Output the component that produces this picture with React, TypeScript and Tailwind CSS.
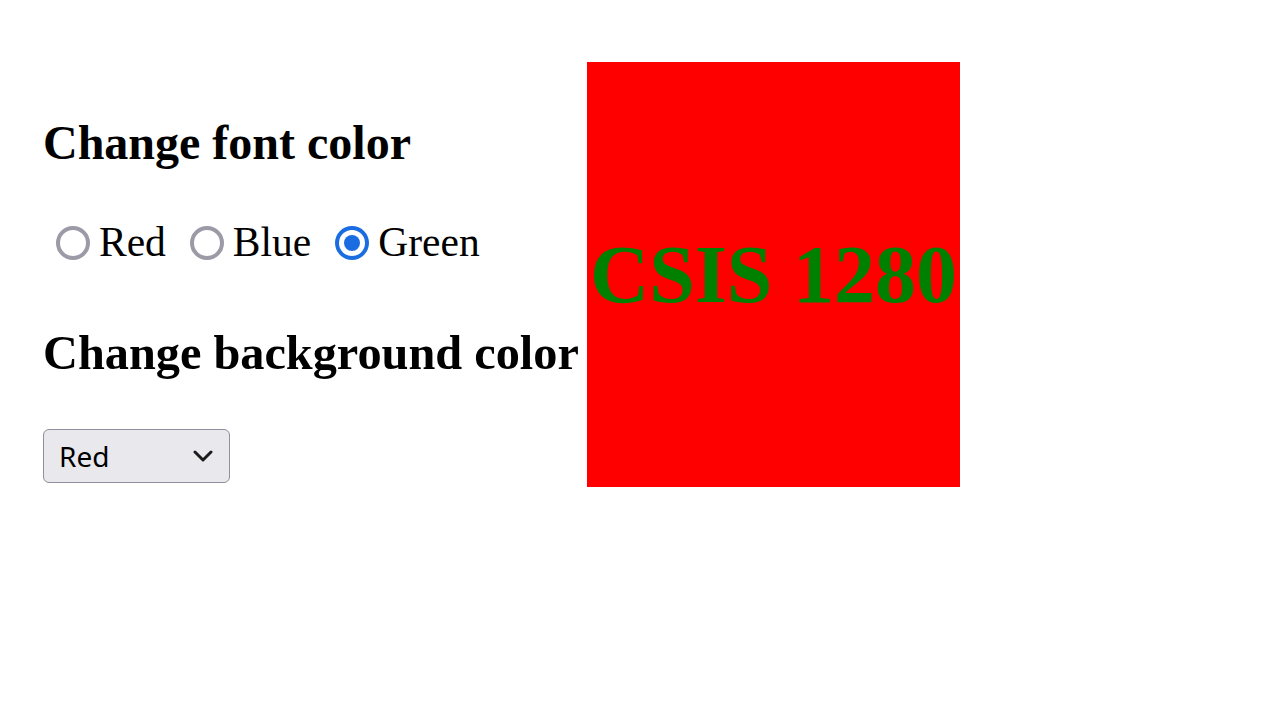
const serif = { fontFamily: '"Liberation Serif", "Times New Roman", serif' };

const options = [
  { label: "Red", checked: false },
  { label: "Blue", checked: false },
  { label: "Green", checked: true },
];

function Radio({ checked }: { checked: boolean }) {
  if (checked) {
    return (
      <span className="flex h-[34px] w-[34px] items-center justify-center rounded-full bg-[#1a6de0]">
        <span className="flex h-[26px] w-[26px] items-center justify-center rounded-full bg-white">
          <span className="h-[16px] w-[16px] rounded-full bg-[#1a6de0]" />
        </span>
      </span>
    );
  }
  return <span className="h-[34px] w-[34px] rounded-full border-[4px] border-[#9c9aa6] bg-white" />;
}

export default function App() {
  return (
    <div className="min-h-[720px] w-full bg-white pl-[43px] text-black" style={serif}>
      <div className="flex items-start">
        <div className="w-[535px] pt-[119px]">
          <h2 className="whitespace-nowrap text-[48px] font-bold leading-none">Change font color</h2>
          <div className="mt-[56px] flex h-[40px] items-center pl-[13px]">
            {options.map((o) => (
              <label key={o.label} className="mr-[24px] flex items-center">
                <Radio checked={o.checked} />
                <span className="ml-[9px] text-[41.5px] leading-none">{o.label}</span>
              </label>
            ))}
          </div>
          <h2 className="mt-[66px] whitespace-nowrap text-[48.3px] font-bold leading-none">Change background color</h2>
          <div
            className="mt-[52px] flex h-[54px] w-[187px] items-center justify-between rounded-[6px] border border-[#8f8f9d] bg-[#e9e9ed] pl-[15px] pr-[16px]"
            style={{ fontFamily: '"Noto Sans", "Open Sans", sans-serif' }}
          >
            <span className="text-[28px] leading-none text-black">Red</span>
            <svg width="20" height="12" viewBox="0 0 20 12" fill="none">
              <path d="M2 2l8 8 8-8" stroke="#1b1b1b" strokeWidth="3" strokeLinecap="round" strokeLinejoin="round" />
            </svg>
          </div>
        </div>
        <div className="ml-[9px] mt-[62px] flex h-[425px] w-[373px] items-center justify-center bg-[#ff0000]">
          <span className="whitespace-nowrap text-[82px] font-bold leading-none text-[#008000]">CSIS 1280</span>
        </div>
      </div>
    </div>
  );
}
